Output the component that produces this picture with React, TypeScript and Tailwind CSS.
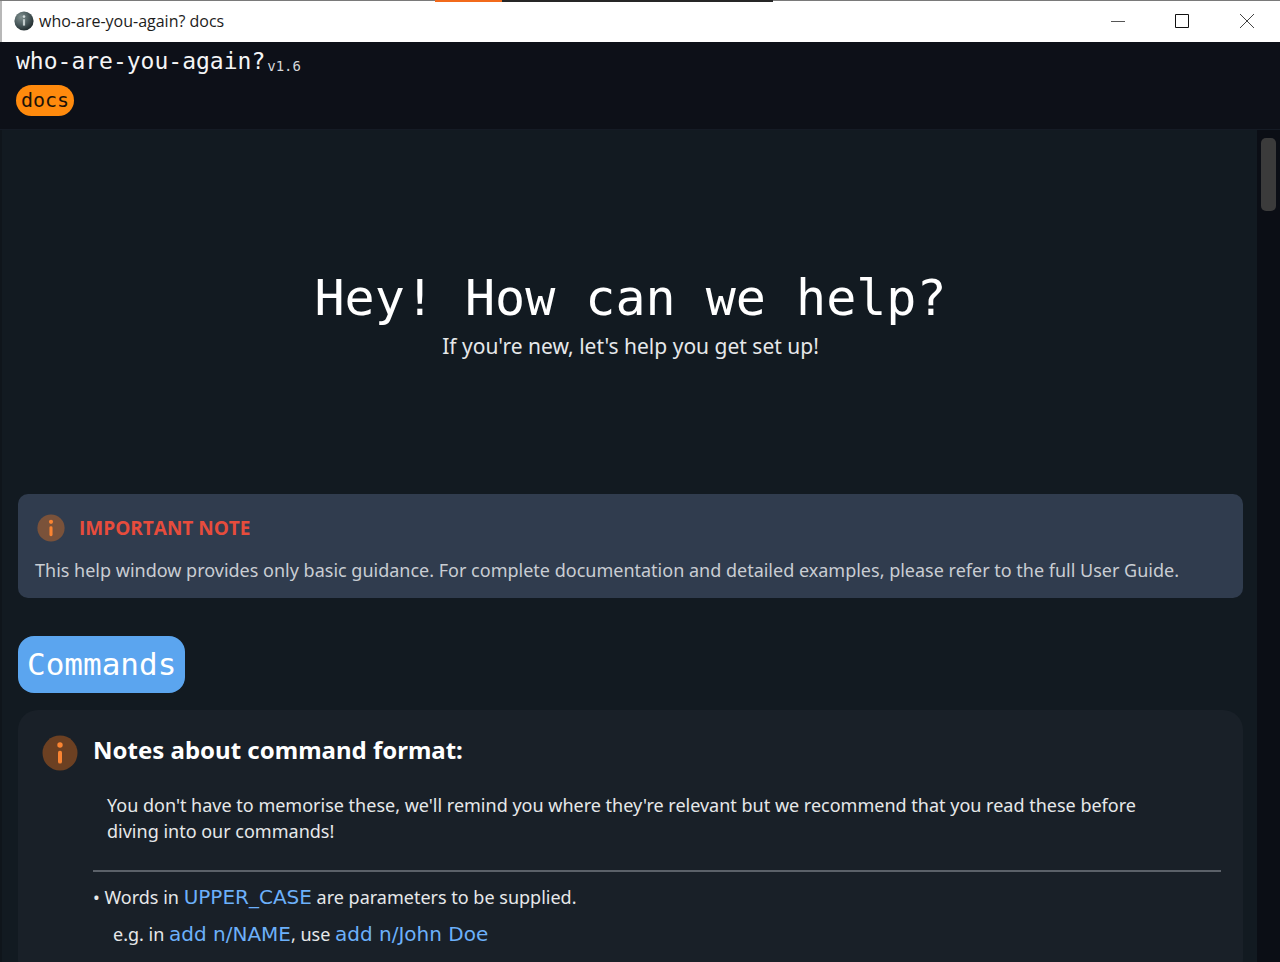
import type { ReactNode } from "react";

function InfoIcon({ className }: { className: string }) {
  return (
    <svg viewBox="0 0 36 36" className={className} aria-hidden="true">
      <circle cx="18" cy="18" r="17.5" fill="#ff7a1a" fillOpacity="0.36" />
      <circle cx="18" cy="10" r="2.7" fill="#fa8432" />
      <rect x="16" y="15.8" width="4" height="12.8" rx="1.8" fill="#fa8432" />
    </svg>
  );
}

function AppIcon() {
  return (
    <svg viewBox="0 0 20 20" className="size-5" aria-hidden="true">
      <defs>
        <radialGradient id="orb" cx="0.35" cy="0.3" r="0.75">
          <stop offset="0" stopColor="#80908f" />
          <stop offset="0.55" stopColor="#4a5a5c" />
          <stop offset="1" stopColor="#1f2a2c" />
        </radialGradient>
      </defs>
      <circle cx="10" cy="10" r="9.6" fill="url(#orb)" />
      <circle cx="10" cy="5.6" r="1.3" fill="#d5dddd" />
      <path d="M8.9 8.2h2.2v6.4H8.9z" fill="#c3cdcd" />
    </svg>
  );
}

function Code({ children }: { children: ReactNode }) {
  return <code className="font-['DejaVu_Sans',sans-serif] text-[20px] text-[#6cb0fa]">{children}</code>;
}

function TitleBar() {
  return (
    <div className="flex h-[42px] shrink-0 flex-col bg-white">
      <div className="flex h-px shrink-0 bg-[#7a7a7a]">
        <div className="w-[34%]" />
        <div className="h-0.5 w-[67px] bg-[#f26a1b]" />
        <div className="h-0.5 w-[271px] bg-[#262626]" />
      </div>
      <div className="flex flex-1 items-center border-l-2 border-[#b8b8b8] pb-0.5 pl-3">
        <AppIcon />
        <span className="ml-[5px] flex-1 font-['Open_Sans',sans-serif] text-[16px] leading-6 text-[#1c1c1c]">
          who-are-you-again? docs
        </span>
        <button type="button" aria-label="Minimize" className="flex h-full w-16 items-center justify-center">
          <svg viewBox="0 0 16 16" className="size-4" stroke="#555" fill="none" aria-hidden="true">
            <path d="M1 8.5h14" />
          </svg>
        </button>
        <button type="button" aria-label="Maximize" className="flex h-full w-16 items-center justify-center">
          <svg viewBox="0 0 16 16" className="size-4" stroke="#111" fill="none" aria-hidden="true">
            <path d="M1.5 1.5h13v13h-13z" />
          </svg>
        </button>
        <button type="button" aria-label="Close" className="flex h-full w-[66px] items-center justify-center">
          <svg viewBox="0 0 16 16" className="size-4" stroke="#444" fill="none" aria-hidden="true">
            <path d="M1 1l14 14M15 1L1 15" />
          </svg>
        </button>
      </div>
    </div>
  );
}

export default function App() {
  return (
    <div className="flex h-screen flex-col overflow-hidden bg-[#121a21] font-['Noto_Sans',sans-serif] text-[18px] leading-[26px] text-[#e6e8ea]">
      <TitleBar />
      <header className="h-[88px] shrink-0 border-b border-[#151b25] bg-[#0d1018] px-4 pt-0.5 font-['DejaVu_Sans_Mono',monospace]">
        <div className="flex items-end gap-0.5 text-[#f4f5f6]">
          <span className="text-[23px] leading-[34px]">who-are-you-again?</span>
          <span className="text-[14px] leading-6 text-[#d5d7da]">v1.6</span>
        </div>
        <button type="button" className="mt-[7px] block h-[31px] rounded-full bg-[#ff8a0d] px-[5px] text-[20px] leading-[31px] text-[#1d1208]">
          docs
        </button>
      </header>
      <div className="flex min-h-0 flex-1">
        <main className="min-w-0 flex-1 overflow-hidden border-l-2 border-[#0f151b] pr-3.5 pl-4">
          <section className="flex h-[364px] flex-col items-center justify-center pt-1 text-center">
            <h1 className="font-['DejaVu_Sans_Mono',monospace] text-[50px] leading-[64px] text-white">Hey! How can we help?</h1>
            <p className="text-[21px] leading-8">If you're new, let's help you get set up!</p>
          </section>

          <section className="rounded-[10px] bg-[#303c4e] px-[17px] pt-5 pb-[15px]">
            <div className="flex items-center gap-3.5 pl-0.5">
              <InfoIcon className="size-7" />
              <h2 className="font-['Open_Sans',sans-serif] text-[19px] font-bold text-[#e74c3c]">IMPORTANT NOTE</h2>
            </div>
            <p className="mt-[15px] text-[#c9cdd3]">
              This help window provides only basic guidance. For complete documentation and detailed examples, please refer to the full User Guide.
            </p>
          </section>

          <h2 className="mt-[38px] w-fit rounded-[16px] bg-[#5ba5ef] px-[9px] font-['DejaVu_Sans_Mono',monospace] text-[31px] leading-[57px] text-white">
            Commands
          </h2>

          <section className="mt-[17px] flex gap-[15px] rounded-[20px] bg-[#192028] pt-6 pr-[22px] pb-8 pl-6">
            <InfoIcon className="mt-px size-9 shrink-0" />
            <div className="min-w-0 flex-1">
              <h3 className="text-[24px] leading-8 font-bold text-white">Notes about command format:</h3>
              <p className="mt-[26px] pr-12 pl-3.5">
                You don't have to memorise these, we'll remind you where they're relevant but we recommend that you read these before diving into our commands!
              </p>
              <hr className="mt-[26px] border-t-2 border-[#5b6169]" />
              <ul className="mt-3">
                <li>
                  <p>• Words in <Code>UPPER_CASE</Code> are parameters to be supplied.</p>
                  <p className="mt-[11px] pl-5">e.g. in <Code>add n/NAME</Code>, use <Code>add n/John Doe</Code></p>
                </li>
              </ul>
            </div>
          </section>
        </main>
        <div className="w-[23px] shrink-0 bg-[#0b0e15] px-1 pt-2">
          <div className="h-[73px] rounded-[5px] bg-[#3b3b3b]" />
        </div>
      </div>
    </div>
  );
}
